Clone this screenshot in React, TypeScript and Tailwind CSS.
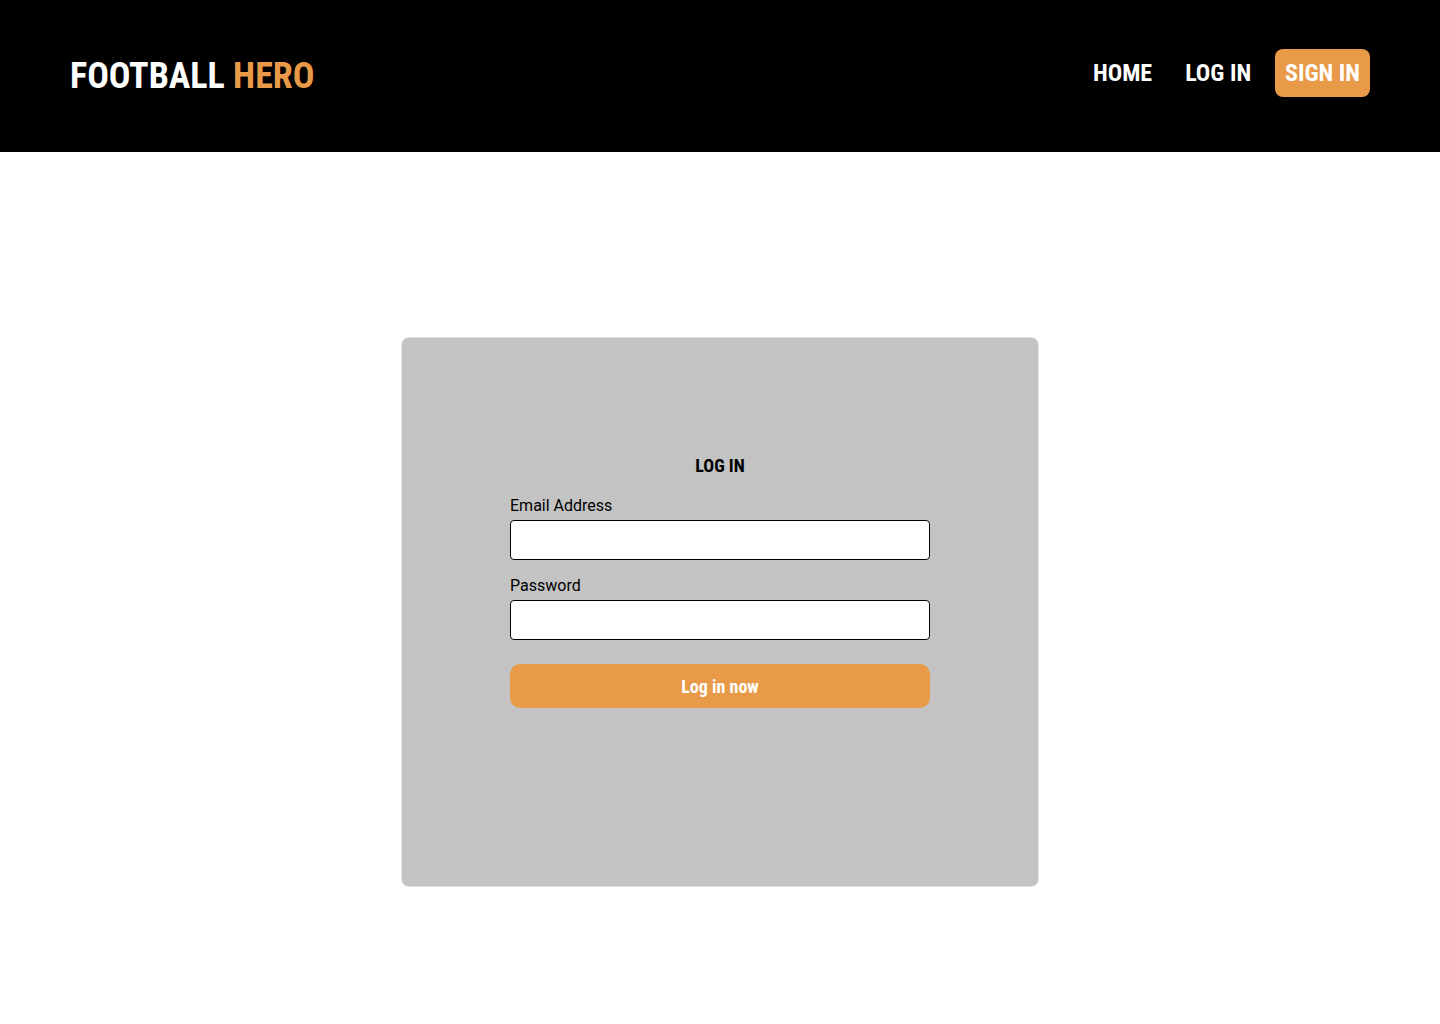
export default function App() {
  const cond = { fontFamily: '"Roboto Condensed", Roboto, sans-serif', fontStretch: 'condensed' as const }
  return (
    <div className="min-h-screen bg-white" style={{ fontFamily: 'Roboto, "Liberation Sans", sans-serif' }}>
      <header className="flex h-[152px] items-center justify-between bg-black px-[70px]">
        <h1 className="text-[36px] font-bold leading-none text-white" style={cond}>
          FOOTBALL <span className="text-[#e89a48]">HERO</span>
        </h1>
        <nav className="flex items-center gap-[24px] pb-[6px] text-[24px] font-bold text-white" style={cond}>
          <a className="mr-[9px]">HOME</a>
          <a>LOG IN</a>
          <a className="flex h-[48px] items-center rounded-lg bg-[#e89a48] px-[10px]">SIGN IN</a>
        </nav>
      </header>

      <main className="flex justify-center pt-[185px]">
        <div className="flex h-[550px] w-[638px] flex-col items-center rounded-lg border border-[#e0e0e0] bg-[#c3c3c3] pt-[119px]">
          <form className="flex w-[420px] flex-col">
            <h2 className="text-center text-[18px] font-bold leading-none text-black" style={cond}>
              LOG IN
            </h2>
            <label className="mt-[22px] text-[16px] leading-[18px] text-black">Email Address</label>
            <input type="email" className="mt-[5px] h-[40px] rounded border border-black bg-white px-2" />
            <label className="mt-[17px] text-[16px] leading-[18px] text-black">Password</label>
            <input type="password" className="mt-[5px] h-[40px] rounded border border-black bg-white px-2" />
            <button
              type="button"
              className="mt-[24px] h-[44px] rounded-[10px] bg-[#e89a48] text-[18px] font-bold text-white"
              style={cond}
            >
              Log in now
            </button>
          </form>
        </div>
      </main>
    </div>
  )
}
